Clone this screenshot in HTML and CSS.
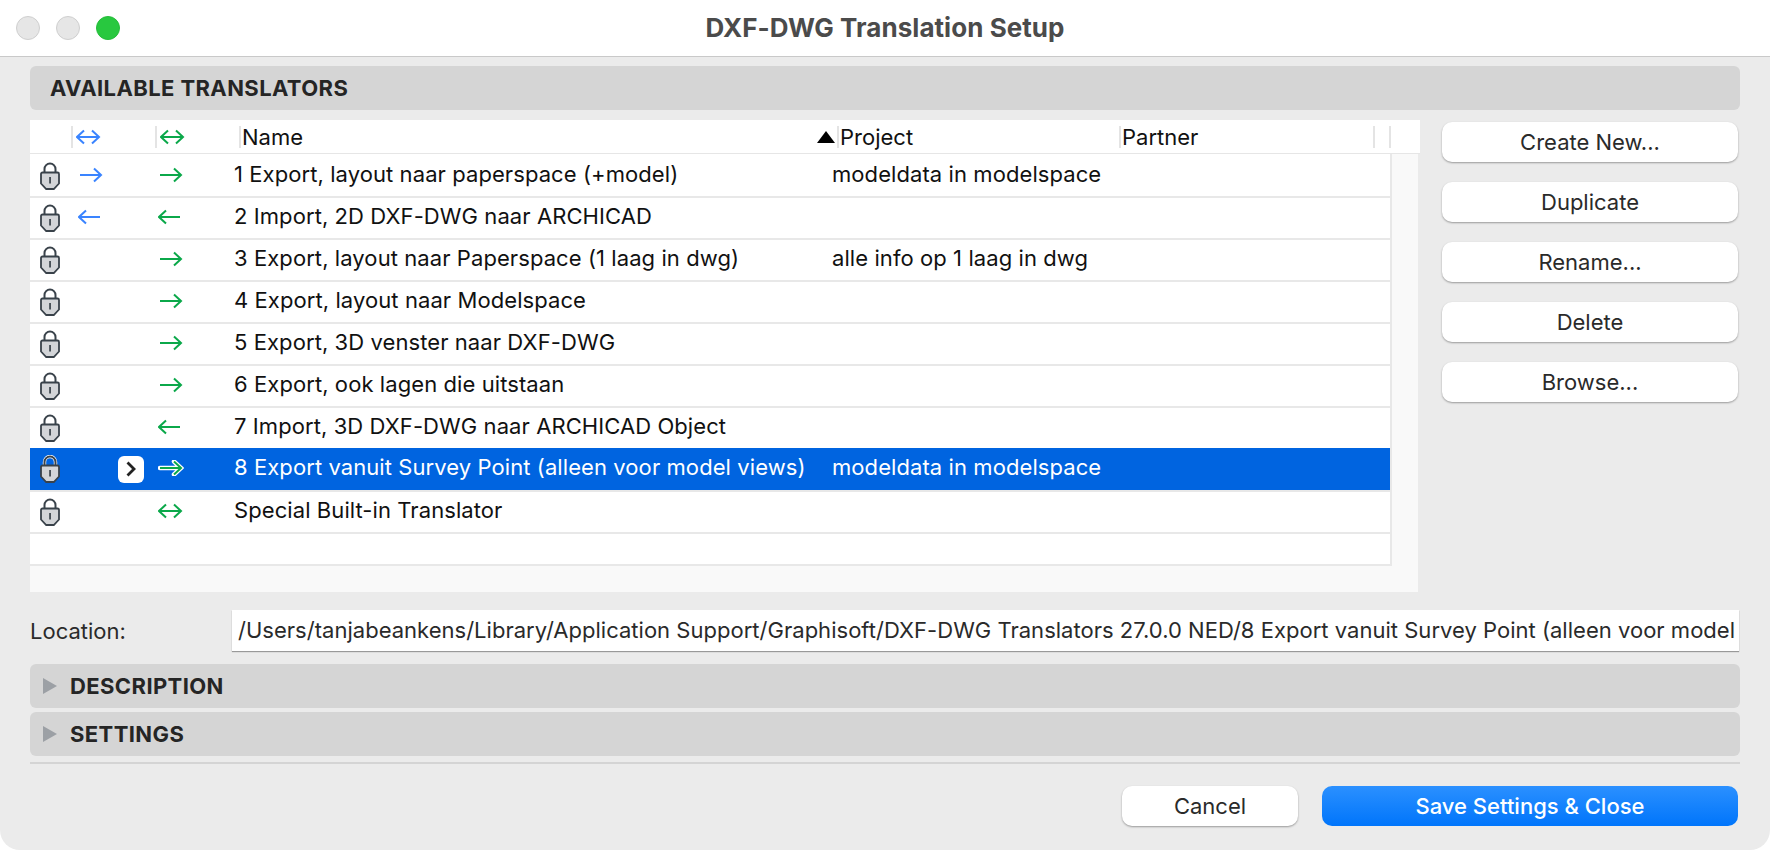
FILE: index.html
```html
<!DOCTYPE html>
<html lang="en">
<head>
<meta charset="utf-8">
<title>DXF-DWG Translation Setup</title>
<link rel="stylesheet" href="styles.css">
</head>
<body>
<svg class="defs" width="0" height="0" aria-hidden="true">
  <symbol id="lock" viewBox="0 0 20 28">
    <path d="M4.5 11V7a5.5 5.5 0 0 1 11 0v4" fill="none" stroke="#39424a" stroke-width="2"/>
    <path d="M2.5 10.500h15a1.500 1.500 0 0 1 1.500 1.500v9.500L13.800 27H6.200L1 21.500V12a1.500 1.500 0 0 1 1.500-1.500z" fill="#d3d5d8" stroke="#39424a" stroke-width="1.800"/>
    <rect x="9.200" y="15" width="1.700" height="6.500" fill="#39424a"/>
  </symbol>
  <symbol id="lock-sel" viewBox="0 0 20 28">
    <path d="M4.5 11V7a5.500 5.500 0 0 1 11 0v4" fill="none" stroke="#fff" stroke-width="3.400"/>
    <path d="M4.5 11V7a5.500 5.500 0 0 1 11 0v4" fill="none" stroke="#39424a" stroke-width="2"/>
    <path d="M2.5 10.500h15a1.500 1.500 0 0 1 1.500 1.500v9.500L13.800 27H6.200L1 21.500V12a1.500 1.500 0 0 1 1.500-1.500z" fill="#d3d5d8" stroke="#39424a" stroke-width="1.800"/>
    <rect x="9.200" y="15" width="1.700" height="6.500" fill="#39424a"/>
  </symbol>
  <symbol id="right" viewBox="0 0 26 16"><path d="M2 8h21M16 1.500 23 8l-7 6.500" fill="none" stroke="currentColor" stroke-width="2"/></symbol>
  <symbol id="left" viewBox="0 0 26 16"><path d="M22 8H1M8 1.500 1 8l7 6.500" fill="none" stroke="currentColor" stroke-width="2"/></symbol>
  <symbol id="both" viewBox="0 0 26 16"><path d="M1 8h22M8 1.500 1 8l7 6.500M16 1.500 23 8l-7 6.500" fill="none" stroke="currentColor" stroke-width="2"/></symbol>
</svg>
<div class="window">
  <header class="titlebar">
    <div class="lights"><span class="light"></span><span class="light"></span><span class="light green"></span></div>
    <div class="title">DXF-DWG Translation Setup</div>
    <div></div>
  </header>
  <main class="content">
    <div class="bar"><span class="bar-label first">AVAILABLE TRANSLATORS</span></div>
    <section class="main">
      <div class="table">
        <div class="thead">
          <div class="th"></div>
          <div class="th sep"><svg class="arrow head-blue blue"><use href="#both"/></svg></div>
          <div class="th sep"><svg class="arrow head-green green"><use href="#both"/></svg></div>
          <div class="th sep name-h"><span>Name</span><span class="sort"></span></div>
          <div class="th sep"><span>Project</span></div>
          <div class="th sep"><span>Partner</span></div>
          <div class="th sep"></div>
          <div class="th sep"></div>
        </div>
        <div class="tbody">
          <div class="list">
            <div class="row">
              <div class="c-lock"><svg class="lock"><use href="#lock"/></svg></div>
              <div class="c-arrow"><svg class="arrow blue"><use href="#right"/></svg></div>
              <div class="c-arrow"><svg class="arrow green"><use href="#right"/></svg></div>
              <div class="cell">1 Export, layout naar paperspace (+model)</div>
              <div class="cell">modeldata in modelspace</div>
            </div>
            <div class="row">
              <div class="c-lock"><svg class="lock"><use href="#lock"/></svg></div>
              <div class="c-arrow"><svg class="arrow blue"><use href="#left"/></svg></div>
              <div class="c-arrow"><svg class="arrow green"><use href="#left"/></svg></div>
              <div class="cell">2 Import, 2D DXF-DWG naar ARCHICAD</div>
              <div class="cell"></div>
            </div>
            <div class="row">
              <div class="c-lock"><svg class="lock"><use href="#lock"/></svg></div>
              <div class="c-arrow"></div>
              <div class="c-arrow"><svg class="arrow green"><use href="#right"/></svg></div>
              <div class="cell">3 Export, layout naar Paperspace (1 laag in dwg)</div>
              <div class="cell">alle info op 1 laag in dwg</div>
            </div>
            <div class="row">
              <div class="c-lock"><svg class="lock"><use href="#lock"/></svg></div>
              <div class="c-arrow"></div>
              <div class="c-arrow"><svg class="arrow green"><use href="#right"/></svg></div>
              <div class="cell">4 Export, layout naar Modelspace</div>
              <div class="cell"></div>
            </div>
            <div class="row">
              <div class="c-lock"><svg class="lock"><use href="#lock"/></svg></div>
              <div class="c-arrow"></div>
              <div class="c-arrow"><svg class="arrow green"><use href="#right"/></svg></div>
              <div class="cell">5 Export, 3D venster naar DXF-DWG</div>
              <div class="cell"></div>
            </div>
            <div class="row">
              <div class="c-lock"><svg class="lock"><use href="#lock"/></svg></div>
              <div class="c-arrow"></div>
              <div class="c-arrow"><svg class="arrow green"><use href="#right"/></svg></div>
              <div class="cell">6 Export, ook lagen die uitstaan</div>
              <div class="cell"></div>
            </div>
            <div class="row">
              <div class="c-lock"><svg class="lock"><use href="#lock"/></svg></div>
              <div class="c-arrow"></div>
              <div class="c-arrow"><svg class="arrow green"><use href="#left"/></svg></div>
              <div class="cell">7 Import, 3D DXF-DWG naar ARCHICAD Object</div>
              <div class="cell"></div>
            </div>
            <div class="row selected">
              <div class="c-lock"><svg class="lock"><use href="#lock-sel"/></svg></div>
              <div class="c-arrow c-more"><span class="more"><svg class="chev" viewBox="0 0 12 16"><path d="M2.500 1.500 9 8l-6.500 6.500" fill="none" stroke="#222" stroke-width="2.800"/></svg></span></div>
              <div class="c-arrow">
                <svg class="arrow halo" viewBox="0 0 26 16"><path d="M2 8h21M16 1.500 23 8l-7 6.500" fill="none" stroke="#fff" stroke-width="4.500" stroke-linecap="round"/><path d="M2 8h21M16 1.500 23 8l-7 6.500" fill="none" stroke="#0ba84a" stroke-width="2"/></svg>
              </div>
              <div class="cell">8 Export vanuit Survey Point (alleen voor model views)</div>
              <div class="cell">modeldata in modelspace</div>
            </div>
            <div class="row">
              <div class="c-lock"><svg class="lock"><use href="#lock"/></svg></div>
              <div class="c-arrow"></div>
              <div class="c-arrow"><svg class="arrow green"><use href="#both"/></svg></div>
              <div class="cell">Special Built-in Translator</div>
              <div class="cell"></div>
            </div>
            <div class="row empty"></div>
          </div>
          <div class="track"></div>
        </div>
        <div class="strip"></div>
      </div>
      <aside class="side">
        <button class="btn">Create New...</button>
        <button class="btn">Duplicate</button>
        <button class="btn">Rename...</button>
        <button class="btn">Delete</button>
        <button class="btn">Browse...</button>
      </aside>
    </section>
    <div class="location">
      <label class="loc-label">Location:</label>
      <div class="loc-field">/Users/tanjabeankens/Library/Application Support/Graphisoft/DXF-DWG Translators 27.0.0 NED/8 Export vanuit Survey Point (alleen voor model</div>
    </div>
    <div class="bar bar-desc"><span class="tri"></span><span class="bar-label">DESCRIPTION</span></div>
    <div class="bar bar-set"><span class="tri"></span><span class="bar-label">SETTINGS</span></div>
    <div class="rule"></div>
    <footer class="footer">
      <button class="btn cancel">Cancel</button>
      <button class="btn primary">Save Settings &amp; Close</button>
    </footer>
  </main>
</div>
</body>
</html>
```
FILE: styles.css
```css
* { box-sizing: border-box; }
html, body { margin: 0; padding: 0; background: #fff; }
body { font-family: "Inter", "Liberation Sans", sans-serif; font-size: 22px; color: #111; overflow: hidden; }
.defs { display: block; height: 0; }
.window { width: 1770px; height: 850px; background: #ebebeb; border-radius: 0 0 20px 20px; overflow: hidden; }
.titlebar { height: 57px; background: #fff; border-bottom: 1px solid #c9c9c9; display: grid; grid-template-columns: 1fr auto 1fr; align-items: center; }
.lights { display: flex; gap: 16px; padding-left: 16px; }
.light { width: 24px; height: 24px; border-radius: 50%; background: #e6e6e6; border: 1px solid #cfcfcf; }
.light.green { background: #28c83f; border-color: #25bd3a; }
.title { font-size: 26px; font-weight: 700; color: #4b4b4b; padding-bottom: 2px; letter-spacing: 0.05px; }
.content { padding: 9px 30px 0; }
.bar { width: 1710px; height: 44px; background: #d5d5d5; border-radius: 6px; display: flex; align-items: center; }
.bar-label { font-size: 22px; font-weight: 700; color: #252525; letter-spacing: 0.4px; }
.bar-label.first { margin-left: 20px; }
.main { display: flex; margin-top: 10px; }
.table { width: 1390px; }
.thead { height: 34px; background: #fff; border-bottom: 1px solid #e6e6e6; display: grid; grid-template-columns: 41px 84px 84px 598px 282px 254px 16px 31px; align-items: center; }
.th { height: 22px; display: flex; align-items: center; }
.th.sep { border-left: 2px solid #e4e4e4; padding-left: 1px; }
.name-h { justify-content: space-between; padding-right: 2px; }
.sort { width: 0; height: 0; border-left: 9.5px solid transparent; border-right: 9.5px solid transparent; border-bottom: 12px solid #000; }
.arrow { width: 26px; height: 16px; display: block; }
.blue { color: #3a84ff; }
.green { color: #0ba84a; }
.head-blue { margin-left: 2px; }
.head-green { margin-left: 2px; }
.tbody { display: flex; background: #f9f9f9; width: 1388px; }
.list { width: 1362px; height: 412px; background: #fff; padding-top: 2px; border-right: 2px solid #e8e8e8; border-bottom: 2px solid #e8e8e8; }
.track { flex: 1; }
.strip { width: 1388px; height: 26px; background: #f9f9f9; }
.row { height: 42px; border-bottom: 2px solid #e8e8e8; display: grid; grid-template-columns: 48px 80px 76px 598px 1fr; align-items: center; }
.row.empty { height: 32px; border-bottom: 0; }
.row.selected { height: 44px; margin-top: -2px; background: #0064e0; color: #fff; }
.c-lock { padding-left: 10px; }
.lock { width: 20px; height: 28px; display: block; overflow: visible; }
.c-arrow { display: flex; margin-top: -3px; }
.c-more { justify-content: flex-end; padding-right: 14px; margin-top: 0; }
.more { width: 26px; height: 27px; background: #fff; border-radius: 6px; display: flex; align-items: center; justify-content: center; }
.chev { width: 12px; height: 16px; display: block; }
.cell { white-space: nowrap; padding-bottom: 4px; letter-spacing: 0.08px; }
.side { margin-left: 22px; width: 296px; padding-top: 2px; display: flex; flex-direction: column; gap: 20px; }
.btn { height: 40px; width: 296px; border: 0; border-radius: 10px; background: #fff; font: 400 22px "Inter", "Liberation Sans", sans-serif; color: #2a2a2a; box-shadow: 0 1px 2px rgba(0,0,0,0.35); padding: 0; }
.location { display: flex; margin-top: 18px; height: 41px; }
.loc-label { width: 202px; line-height: 42px; color: #2a2a2a; }
.loc-field { width: 1507px; height: 41px; background: #fff; box-shadow: 0 1px 1px rgba(0,0,0,0.35); padding-left: 6px; line-height: 40px; white-space: nowrap; overflow: hidden; color: #2a2a2a; letter-spacing: 0.02px; }
.bar-desc { margin-top: 13px; }
.bar-set { margin-top: 4px; }
.tri { width: 0; height: 0; margin: 0 13px 0 13px; border-top: 8.5px solid transparent; border-bottom: 8.5px solid transparent; border-left: 14px solid #9ca0a5; }
.rule { width: 1710px; height: 2px; background: #d4d4d4; margin-top: 6px; }
.footer { display: flex; margin-top: 22px; width: 1708px; justify-content: flex-end; gap: 24px; }
.cancel { width: 176px; }
.primary { width: 416px; background: linear-gradient(#2b90ff, #0075fb); color: #fff; font-weight: 500; box-shadow: none; }
```
